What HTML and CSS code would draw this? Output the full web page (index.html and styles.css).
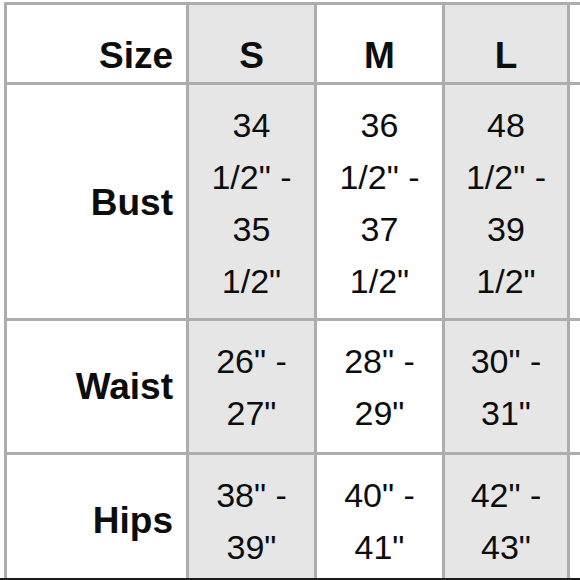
FILE: index.html
```html
<!DOCTYPE html>
<html>
<head>
<meta charset="utf-8">
<link rel="stylesheet" href="styles.css">
</head>
<body>
<div class="frame">
  <table class="chart">
    <colgroup>
      <col class="c-label">
      <col class="c-size">
      <col class="c-size">
      <col class="c-size-l">
      <col class="c-size">
    </colgroup>
    <tr class="r-head">
      <td class="label">Size</td>
      <td class="head shade">S</td>
      <td class="head">M</td>
      <td class="head shade">L</td>
      <td class="head"></td>
    </tr>
    <tr class="r-bust">
      <td class="label">Bust</td>
      <td class="val shade">34<br>1/2" -<br>35<br>1/2"</td>
      <td class="val">36<br>1/2" -<br>37<br>1/2"</td>
      <td class="val shade">48<br>1/2" -<br>39<br>1/2"</td>
      <td class="val"></td>
    </tr>
    <tr class="r-waist">
      <td class="label">Waist</td>
      <td class="val shade">26" -<br>27"</td>
      <td class="val">28" -<br>29"</td>
      <td class="val shade">30" -<br>31"</td>
      <td class="val"></td>
    </tr>
    <tr class="r-hips">
      <td class="label">Hips</td>
      <td class="val shade">38" -<br>39"</td>
      <td class="val">40" -<br>41"</td>
      <td class="val shade">42" -<br>43"</td>
      <td class="val"></td>
    </tr>
  </table>
</div>
</body>
</html>
```
FILE: styles.css
```css
html, body {
  margin: 0;
  padding: 0;
  background: #ffffff;
}
.frame {
  width: 580px;
  height: 580px;
  overflow: hidden;
  box-sizing: border-box;
  padding: 2px 0 0 4px;
  border-bottom: 2px solid #1c1c1c;
}
.chart {
  border-collapse: separate;
  border-spacing: 0;
  table-layout: fixed;
  width: 694px;
  border-top: 3px solid #adadad;
  border-left: 3px solid #adadad;
  font-family: "Liberation Sans", Arial, sans-serif;
  color: #0d0d0d;
}
.c-label { width: 182px; }
.c-size { width: 128px; }
.c-size-l { width: 125px; }
.chart td {
  box-sizing: border-box;
  border-right: 3px solid #adadad;
  border-bottom: 3px solid #adadad;
  padding: 0;
  line-height: 52px;
  background: #ffffff;
}
.chart td.shade { background: #e6e6e6; }
.r-head td { height: 80px; vertical-align: bottom; }
.r-bust td { height: 236px; vertical-align: middle; padding-top: 2px; }
.r-waist td { height: 134px; vertical-align: middle; }
.r-hips td { height: 134px; vertical-align: middle; }
.label {
  text-align: right;
  padding-right: 13px !important;
  font-weight: bold;
  font-size: 37px;
}
.head {
  text-align: center;
  font-weight: bold;
  font-size: 37px;
}
.val {
  text-align: center;
  font-size: 34px;
}
```
